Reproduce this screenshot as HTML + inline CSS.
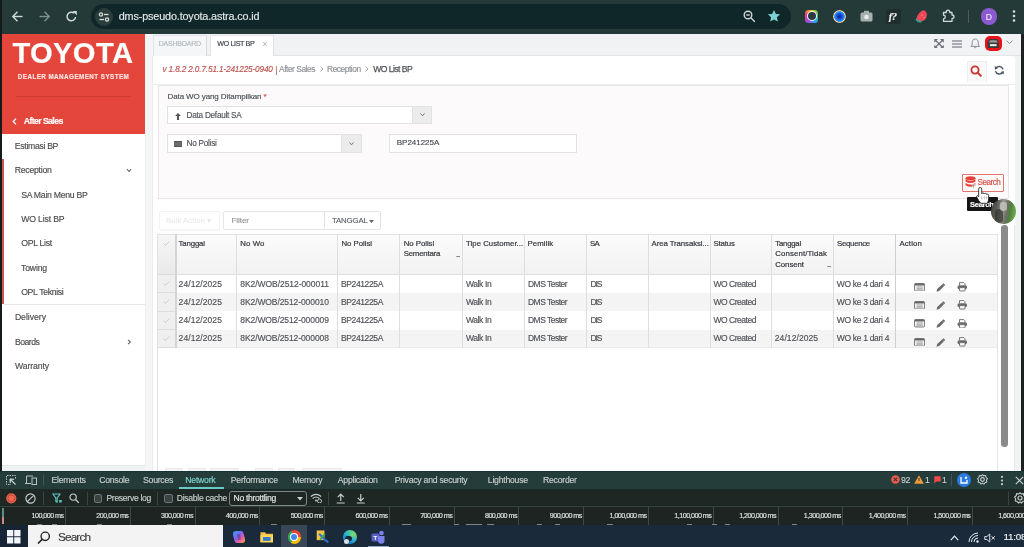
<!DOCTYPE html>
<html><head><meta charset="utf-8"><title>WO List BP</title>
<style>
html,body{margin:0;padding:0;}
body{width:1024px;height:547px;overflow:hidden;position:relative;font-family:"Liberation Sans",sans-serif;background:#f0f1f3;}
#w{position:absolute;left:0;top:0;width:1024px;height:547px;overflow:hidden;filter:blur(0.3px);}
#w>div,#w>svg{position:absolute;}
.t{white-space:nowrap;-webkit-text-stroke-width:0.15px;}
</style></head><body><div id="w">
<div style="left:0.0px;top:0.0px;width:1024.0px;height:547.0px;background:#f0f1f3"></div>
<div style="left:0.0px;top:0.0px;width:1024.0px;height:34.0px;background:#243a38"></div>
<div style="left:0.0px;top:0.0px;width:1.5px;height:547.0px;background:#161a1a"></div>
<div style="left:1020.7px;top:34.0px;width:3.3px;height:437.0px;background:#1c2020"></div>
<div style="left:91.4px;top:3.8px;width:700.1px;height:24.8px;background:#10272a;border-radius:12.4px"></div>
<div style="left:95px;top:7.5px;width:18px;height:18px;border-radius:9px;background:#2a3e3c"></div>
<svg style="left:97px;top:9.5px" width="14" height="14" viewBox="0 0 14 14"><g stroke="#d8dedd" stroke-width="1.3" fill="none"><circle cx="4" cy="4.5" r="1.6"/><line x1="7" y1="4.5" x2="11.5" y2="4.5"/><line x1="2.5" y1="9.5" x2="7" y2="9.5"/><circle cx="10" cy="9.5" r="1.6"/></g></svg>
<div class="t" style="top:10.38px;font-size:10.8px;line-height:12.96px;color:#e4e9e8;font-weight:normal;left:118.7px;;letter-spacing:-0.134px">dms-pseudo.toyota.astra.co.id</div>
<svg style="left:11px;top:10px" width="13" height="13" viewBox="0 0 13 13"><g stroke="#d3dbd9" stroke-width="1.4" fill="none"><line x1="2" y1="6.5" x2="11.5" y2="6.5"/><polyline points="6.5,1.8 1.8,6.5 6.5,11.2"/></g></svg>
<svg style="left:38px;top:10px" width="13" height="13" viewBox="0 0 13 13"><g stroke="#7f8f8d" stroke-width="1.4" fill="none"><line x1="1.5" y1="6.5" x2="11" y2="6.5"/><polyline points="6.5,1.8 11.2,6.5 6.5,11.2"/></g></svg>
<svg style="left:65px;top:9.5px" width="13" height="13" viewBox="0 0 13 13"><g stroke="#d3dbd9" stroke-width="1.5" fill="none"><path d="M10.6,7.2 A4.3,4.3 0 1 1 9.2,3.3"/></g><polygon points="7.5,1 11.8,1 11.8,5.3" fill="#d3dbd9"/></svg>
<svg style="left:743px;top:10px" width="13" height="13" viewBox="0 0 13 13"><g stroke="#cfd6d5" stroke-width="1.4" fill="none"><circle cx="5" cy="5" r="3.8"/><line x1="7.8" y1="7.8" x2="11.8" y2="11.8"/><line x1="3.2" y1="5" x2="6.8" y2="5"/></g></svg>
<svg style="left:767px;top:9px" width="14" height="14" viewBox="0 0 24 24"><path d="M12 1.5l3.2 6.9 7.3.8-5.5 5 1.5 7.3L12 17.8l-6.5 3.7 1.5-7.3-5.5-5 7.3-.8z" fill="#7fd1d0"/></svg>
<div style="left:805px;top:9.5px;width:13px;height:13px;border-radius:3.5px;background:conic-gradient(#f7c21b,#40c463,#2aa4f4,#a148e0,#ee3b7a,#f7c21b)"></div>
<div style="left:807.5px;top:12px;width:8px;height:8px;border-radius:4px;background:#2b3a45;box-shadow:0 0 0 1px #fff"></div>
<div style="left:832.5px;top:9.5px;width:13px;height:13px;border-radius:7px;background:radial-gradient(circle,#08208a 0,#1a5ee8 35%,#3a9cff 55%,#e9e2d0 62%,#f5a33a 70%,#f07a2a 100%)"></div>
<svg style="left:860px;top:10px" width="13" height="12" viewBox="0 0 13 12"><rect x="0.5" y="2.5" width="12" height="9" rx="1.5" fill="#a8b0ae"/><rect x="4" y="0.8" width="5" height="2.5" fill="#a8b0ae"/><circle cx="6.5" cy="7" r="2.3" fill="#e8ecea"/></svg>
<div style="left:886px;top:9px;width:15px;height:15px;background:#1f2d2c;border-radius:2px"></div>
<div class="t" style="top:10.56px;font-size:10.5px;line-height:12.60px;color:#f4f4f4;font-weight:bold;left:888.8px;font-family:Liberation Serif;letter-spacing:-0.5px"><i>f?</i></div>
<svg style="left:914px;top:9px" width="14" height="14" viewBox="0 0 14 14"><path d="M9 1.2 C12 1.5 13.2 4 12.8 7 C12.3 10 10 12 7.5 12.3 C5.5 12.5 3.2 11.5 2.2 10 C3 7 5 3 9 1.2z" fill="#ee4757"/><path d="M2 10 C3.5 12.5 6 13 7.5 12.4" stroke="#2aa79b" stroke-width="1.6" fill="none"/><circle cx="8" cy="6" r="0.6" fill="#ffb3b8"/><circle cx="10" cy="8.5" r="0.6" fill="#ffb3b8"/></svg>
<svg style="left:941px;top:9px" width="14" height="14" viewBox="0 0 14 14"><path d="M2.5 3.5 H5.2 Q5.2 1.2 7 1.2 Q8.8 1.2 8.8 3.5 H11 V6 Q13 6 13 7.8 Q13 9.6 11 9.6 V12.3 H2.5 V9.8 Q4.3 9.8 4.3 8 Q4.3 6.2 2.5 6.2z" stroke="#d3dbd9" stroke-width="1.3" fill="none" stroke-linejoin="round"/></svg>
<div style="left:967.5px;top:10.0px;width:1.0px;height:13.0px;background:#4a5c5a"></div>
<div style="left:980.5px;top:8px;width:16.5px;height:16.5px;border-radius:9px;background:#8c5ad0"></div>
<div class="t" style="top:11.95px;font-size:8.5px;line-height:10.20px;color:#f0e8fa;font-weight:normal;left:988.8px;transform:translateX(-50%)">D</div>
<svg style="left:1012px;top:9px" width="4" height="14" viewBox="0 0 4 14"><g fill="#d8dedd"><circle cx="2" cy="2.5" r="1.3"/><circle cx="2" cy="7" r="1.3"/><circle cx="2" cy="11.5" r="1.3"/></g></svg>
<div style="left:1.5px;top:34.0px;width:143.5px;height:100.4px;background:#e5463b"></div>
<div class="t" style="top:35.66px;font-size:29.2px;line-height:35.04px;color:#ffffff;font-weight:bold;left:12.4px;;letter-spacing:0.336px">TOYOTA</div>
<div class="t" style="top:72.74px;font-size:6.3px;line-height:7.56px;color:#fbe6e3;font-weight:bold;left:17.8px;;letter-spacing:0.430px">DEALER MANAGEMENT SYSTEM</div>
<div style="left:15.6px;top:96.2px;width:115.2px;height:1.0px;background:#d23b30"></div>
<svg style="left:11.8px;top:117.8px" width="5" height="7" viewBox="0 0 5 7"><polyline points="4,0.8 1.2,3.5 4,6.2" stroke="#fff" stroke-width="1.2" fill="none"/></svg>
<div class="t" style="top:115.97px;font-size:8.8px;line-height:10.56px;color:#ffffff;font-weight:bold;left:23.8px;;letter-spacing:-0.647px">After Sales</div>
<div style="left:1.5px;top:134.4px;width:143.5px;height:331.6px;background:#ffffff"></div>
<div style="left:1.5px;top:159.0px;width:2.3px;height:145.0px;background:#c9584e"></div>
<div style="left:3.8px;top:303.5px;width:141.2px;height:1.3px;background:#e4e6e8"></div>
<div class="t" style="top:140.97px;font-size:8.7px;line-height:10.44px;color:#4c4c4c;font-weight:normal;left:14.8px;;letter-spacing:-0.323px">Estimasi BP</div>
<div class="t" style="top:165.27px;font-size:8.7px;line-height:10.44px;color:#4c4c4c;font-weight:normal;left:14.8px;;letter-spacing:-0.266px">Reception</div>
<div class="t" style="top:190.07px;font-size:8.7px;line-height:10.44px;color:#4c4c4c;font-weight:normal;left:21.2px;;letter-spacing:-0.280px">SA Main Menu BP</div>
<div class="t" style="top:214.27px;font-size:8.7px;line-height:10.44px;color:#4c4c4c;font-weight:normal;left:21.2px;;letter-spacing:-0.167px">WO List BP</div>
<div class="t" style="top:238.37px;font-size:8.7px;line-height:10.44px;color:#4c4c4c;font-weight:normal;left:21.2px;;letter-spacing:-0.286px">OPL List</div>
<div class="t" style="top:262.77px;font-size:8.7px;line-height:10.44px;color:#4c4c4c;font-weight:normal;left:21.0px;;letter-spacing:-0.169px">Towing</div>
<div class="t" style="top:286.77px;font-size:8.7px;line-height:10.44px;color:#4c4c4c;font-weight:normal;left:21.2px;;letter-spacing:-0.327px">OPL Teknisi</div>
<div class="t" style="top:312.07px;font-size:8.7px;line-height:10.44px;color:#4c4c4c;font-weight:normal;left:14.9px;;letter-spacing:-0.042px">Delivery</div>
<div class="t" style="top:336.67px;font-size:8.7px;line-height:10.44px;color:#4c4c4c;font-weight:normal;left:14.9px;;letter-spacing:-0.506px">Boards</div>
<div class="t" style="top:360.77px;font-size:8.7px;line-height:10.44px;color:#4c4c4c;font-weight:normal;left:14.9px;;letter-spacing:-0.089px">Warranty</div>
<svg style="left:125.5px;top:168px" width="6" height="5" viewBox="0 0 6 5"><polyline points="0.8,1 3,3.4 5.2,1" stroke="#666" stroke-width="1.1" fill="none"/></svg>
<svg style="left:126.5px;top:338.5px" width="5" height="6" viewBox="0 0 5 6"><polyline points="1,0.8 3.4,3 1,5.2" stroke="#666" stroke-width="1.1" fill="none"/></svg>
<div style="left:1.5px;top:465.3px;width:143.5px;height:1.0px;background:#e4e6e8"></div>
<div style="left:145.0px;top:34.0px;width:7.5px;height:436.6px;background:#f4f5f7"></div>
<div style="left:144.6px;top:134.4px;width:1.0px;height:331.9px;background:#eceef0"></div>
<div style="left:152.0px;top:56.0px;width:1.0px;height:414.6px;background:#e9ebed"></div>
<div style="left:152.5px;top:34.0px;width:868.2px;height:21.8px;background:#f1f2f4"></div>
<div style="left:152.5px;top:55.3px;width:868.2px;height:1.0px;background:#e3e5e8"></div>
<div style="left:153.3px;top:34.8px;width:54.2px;height:21.0px;background:#f5f6f7;border:1px solid #e1e3e6;border-right:1.5px solid #d8dadd;border-bottom:none;box-sizing:border-box"></div>
<div class="t" style="top:40.27px;font-size:7.0px;line-height:8.40px;color:#b4b9be;font-weight:normal;left:158.8px;;letter-spacing:-0.262px">DASHBOARD</div>
<div style="left:209.5px;top:34.8px;width:64.5px;height:21.5px;background:#ffffff;border:1px solid #e1e3e6;border-bottom:none;box-sizing:border-box"></div>
<div class="t" style="top:40.49px;font-size:7.2px;line-height:8.64px;color:#454b52;font-weight:normal;left:217.3px;-webkit-text-stroke:0.2px #454b52;;letter-spacing:-0.391px">WO LIST BP</div>
<div class="t" style="top:39.45px;font-size:8.5px;line-height:10.20px;color:#b5b8bc;font-weight:normal;left:262.5px;">&#215;</div>
<svg style="left:933.5px;top:38.5px" width="10" height="9.5" viewBox="0 0 10 10"><g stroke="#6d7278" stroke-width="1.3" fill="none"><line x1="1" y1="1" x2="9" y2="9"/><line x1="9" y1="1" x2="1" y2="9"/></g><g fill="#6d7278"><polygon points="0,0 4,0 0,4"/><polygon points="10,0 6,0 10,4"/><polygon points="0,10 4,10 0,6"/><polygon points="10,10 6,10 10,6"/></g></svg>
<svg style="left:951.5px;top:39.5px" width="10" height="8" viewBox="0 0 10 8"><g stroke="#6d7278" stroke-width="1.1"><line x1="0" y1="1" x2="10" y2="1"/><line x1="0" y1="4" x2="10" y2="4"/><line x1="0" y1="7" x2="10" y2="7"/></g></svg>
<svg style="left:969.5px;top:38.3px" width="10.5" height="10.5" viewBox="0 0 11 11"><path d="M5.5 1 C3.2 1 2.3 3 2.3 5 L2.3 7.3 L1 8.8 L10 8.8 L8.7 7.3 L8.7 5 C8.7 3 7.8 1 5.5 1z" stroke="#7a7f84" stroke-width="0.9" fill="none"/><path d="M4.3 9.5 Q5.5 11 6.7 9.5" stroke="#7a7f84" stroke-width="0.9" fill="none"/></svg>
<div style="left:985px;top:35.6px;width:17.3px;height:15.2px;border-radius:5px;background:#e8121a"></div>
<svg style="left:987.3px;top:38px" width="12.5" height="10.5" viewBox="0 0 12 10"><path d="M2.2 1 H9.8 L11.5 4.5 V9.5 H0.5 V4.5z" fill="#3a3a3a"/><path d="M3 2 H9 L10.2 4.3 H1.8z" fill="#9a9a9a"/><rect x="2.8" y="5.8" width="6.4" height="2" fill="#e8e8e8"/></svg>
<svg style="left:1005.5px;top:40px" width="7" height="4.5" viewBox="0 0 7 4.5"><polyline points="0.6,0.6 3.5,3.6 6.4,0.6" stroke="#8a8f94" stroke-width="1" fill="none"/></svg>
<div style="left:152.5px;top:56.4px;width:862.1px;height:414.2px;background:#ffffff;border-top-right-radius:3px"></div>
<div style="left:1014.6px;top:56.3px;width:6.1px;height:414.3px;background:#f1f2f4"></div>
<div class="t" style="top:64.64px;font-size:8.2px;line-height:9.84px;color:#c0524e;font-weight:normal;font-style:italic;left:162.5px;;letter-spacing:-0.133px">v 1.8.2 2.0.7.51.1-241225-0940</div>
<div class="t" style="top:64.66px;font-size:8.6px;line-height:10.32px;color:#c0625e;font-weight:normal;left:275.2px;">|</div>
<div class="t" style="top:64.45px;font-size:8.4px;line-height:10.08px;color:#8d9196;font-weight:normal;left:279.1px;;letter-spacing:-0.467px">After Sales</div>
<svg style="left:319.8px;top:65.8px" width="4" height="6" viewBox="0 0 4 6"><polyline points="0.7,0.6 3,3 0.7,5.4" stroke="#9a9ea2" stroke-width="0.9" fill="none"/></svg>
<div class="t" style="top:64.45px;font-size:8.4px;line-height:10.08px;color:#8d9196;font-weight:normal;left:327.1px;;letter-spacing:-0.465px">Reception</div>
<svg style="left:365.2px;top:65.8px" width="4" height="6" viewBox="0 0 4 6"><polyline points="0.7,0.6 3,3 0.7,5.4" stroke="#9a9ea2" stroke-width="0.9" fill="none"/></svg>
<div class="t" style="top:64.26px;font-size:8.6px;line-height:10.32px;color:#505459;font-weight:normal;left:373.2px;-webkit-text-stroke:0.25px #505459;;letter-spacing:-0.547px">WO List BP</div>
<div style="left:152.5px;top:83.5px;width:862.1px;height:1.0px;background:#eceeef"></div>
<div style="left:967.4px;top:61.0px;width:19.2px;height:21.0px;background:#f9f9f9;border:1px solid #eeeeee;border-bottom:none;box-sizing:border-box"></div>
<svg style="left:970px;top:64.5px" width="12" height="12" viewBox="0 0 12 12"><circle cx="5" cy="5" r="3.6" stroke="#d2322d" stroke-width="1.8" fill="none"/><line x1="7.6" y1="7.6" x2="10.8" y2="10.8" stroke="#d2322d" stroke-width="2" stroke-linecap="round"/></svg>
<svg style="left:993.5px;top:64.5px" width="10.5" height="10.5" viewBox="0 0 12 12"><path d="M10.3 5 A4.5 4.5 0 0 0 2.2 3.6" stroke="#4d5560" stroke-width="1.7" fill="none"/><polygon points="0.8,1.2 4.6,3.6 1.0,5.4" fill="#4d5560"/><path d="M1.7 7 A4.5 4.5 0 0 0 9.8 8.4" stroke="#4d5560" stroke-width="1.7" fill="none"/><polygon points="11.2,10.8 7.4,8.4 11,6.6" fill="#4d5560"/></svg>
<div style="left:157.8px;top:84.5px;width:851.2px;height:114.0px;background:#fcfafa;border:1px solid #e8e6e6;box-sizing:border-box"></div>
<div class="t" style="top:91.93px;font-size:8.0px;line-height:9.60px;color:#4b4f55;font-weight:normal;left:167.5px;;letter-spacing:-0.105px">Data WO yang Ditampilkan <span style="color:#d9534f">*</span></div>
<div style="left:167.2px;top:105.5px;width:265.3px;height:18.3px;background:#ffffff;border:1px solid #e2e2e2;box-sizing:border-box"></div>
<div style="left:411.6px;top:105.5px;width:20.9px;height:18.3px;background:#ececec;border:1px solid #e2e2e2;box-sizing:border-box"></div>
<svg style="left:419.5px;top:113px" width="5" height="3.5" viewBox="0 0 5 3.5"><polyline points="0.5,0.5 2.5,2.8 4.5,0.5" stroke="#666" stroke-width="0.9" fill="none"/></svg>
<svg style="left:174.5px;top:112.5px" width="6" height="7" viewBox="0 0 6 7"><polygon points="3,0 6,3 4,3 4,7 2,7 2,3 0,3" fill="#555"/></svg>
<div class="t" style="top:110.84px;font-size:8.2px;line-height:9.84px;color:#50545a;font-weight:normal;left:186.6px;;letter-spacing:-0.251px">Data Default SA</div>
<div style="left:167.2px;top:133.5px;width:194.4px;height:19.0px;background:#ffffff;border:1px solid #e2e2e2;box-sizing:border-box"></div>
<div style="left:341.0px;top:133.5px;width:20.6px;height:19.0px;background:#ececec;border:1px solid #e2e2e2;box-sizing:border-box"></div>
<svg style="left:348.8px;top:141.5px" width="5" height="3.5" viewBox="0 0 5 3.5"><polyline points="0.5,0.5 2.5,2.8 4.5,0.5" stroke="#666" stroke-width="0.9" fill="none"/></svg>
<svg style="left:173.5px;top:140.5px" width="8" height="6" viewBox="0 0 8 6"><rect x="0" y="0" width="8" height="6" fill="#555"/><g stroke="#aaa" stroke-width="0.5"><line x1="0" y1="2" x2="8" y2="2"/><line x1="0" y1="4" x2="8" y2="4"/></g></svg>
<div class="t" style="top:138.64px;font-size:8.2px;line-height:9.84px;color:#50545a;font-weight:normal;left:186.6px;;letter-spacing:-0.264px">No Polisi</div>
<div style="left:389.4px;top:133.5px;width:187.6px;height:19.0px;background:#ffffff;border:1px solid #e2e2e2;box-sizing:border-box"></div>
<div class="t" style="top:138.43px;font-size:8.0px;line-height:9.60px;color:#44484e;font-weight:normal;left:396.8px;;letter-spacing:-0.025px">BP241225A</div>
<div style="left:962.1px;top:174.2px;width:41.7px;height:17.8px;background:#fffafa;border:1px solid #e2736d;box-sizing:border-box;border-radius:1px"></div>
<svg style="left:964.8px;top:176.3px" width="11" height="13" viewBox="0 0 11 13"><g fill="#e5413a"><ellipse cx="5.5" cy="2.2" rx="5" ry="2"/><path d="M0.5 3.3 Q5.5 6.3 10.5 3.3 V5.6 Q5.5 8.6 0.5 5.6z"/><path d="M0.5 6.9 Q5.5 9.9 10.5 6.9 V9.2 Q5.5 12.2 0.5 9.2z"/></g><path d="M6.5 8.5 H10.5 L9 10.5 V12.5 L8 12 V10.5z" fill="#8a8a8a" stroke="#fff" stroke-width="0.5"/></svg>
<div class="t" style="top:178.24px;font-size:8.2px;line-height:9.84px;color:#dc4e46;font-weight:normal;left:977.5px;;letter-spacing:-0.511px">Search</div>
<div style="left:158.5px;top:211.2px;width:61.0px;height:18.8px;background:#ffffff;border:1px solid #f3f3f3;box-sizing:border-box;border-radius:2px;box-shadow:0 1px 1px rgba(0,0,0,0.03)"></div>
<div class="t" style="top:215.92px;font-size:7.8px;line-height:9.36px;color:#e6e6e6;font-weight:normal;left:166.0px;-webkit-text-stroke-width:0;;letter-spacing:0.038px">Bulk Action &#9662;</div>
<div style="left:223.0px;top:211.2px;width:158.2px;height:18.8px;background:#ffffff;border:1px solid #e4e4e4;box-sizing:border-box;border-radius:2px"></div>
<div style="left:324.4px;top:211.2px;width:56.8px;height:18.8px;background:#ffffff;border:1px solid #e4e4e4;box-sizing:border-box;border-radius:0 2px 2px 0"></div>
<div class="t" style="top:215.73px;font-size:8.0px;line-height:9.60px;color:#8f9398;font-weight:normal;left:231.4px;;letter-spacing:-0.036px">Filter</div>
<div class="t" style="top:215.92px;font-size:7.8px;line-height:9.36px;color:#5d6268;font-weight:normal;left:332.0px;;letter-spacing:-0.148px">TANGGAL</div>
<svg style="left:368.5px;top:219.5px" width="5" height="3" viewBox="0 0 5 3"><polygon points="0,0 5,0 2.5,3" fill="#5d6268"/></svg>
<div style="left:157.3px;top:234.4px;width:840.7px;height:40.2px;background:linear-gradient(#fbfbfb,#f2f2f2);border-top:1px solid #e2e2e2;border-bottom:1px solid #dedede;box-sizing:border-box"></div>
<div style="left:157.3px;top:274.6px;width:840.7px;height:18.0px;background:#ffffff"></div>
<div style="left:157.3px;top:292.6px;width:840.7px;height:18.6px;background:#f4f4f4"></div>
<div style="left:157.3px;top:311.2px;width:840.7px;height:18.3px;background:#ffffff"></div>
<div style="left:157.3px;top:329.5px;width:840.7px;height:18.1px;background:#f4f4f4"></div>
<div style="left:157.3px;top:347.1px;width:840.7px;height:1.0px;background:#ececec"></div>
<div style="left:156.8px;top:234.4px;width:1.0px;height:113.2px;background:#dedede"></div>
<div style="left:175.0px;top:234.4px;width:1.0px;height:113.2px;background:#dedede"></div>
<div style="left:236.0px;top:234.4px;width:1.0px;height:113.2px;background:#dedede"></div>
<div style="left:337.2px;top:234.4px;width:1.0px;height:113.2px;background:#dedede"></div>
<div style="left:398.8px;top:234.4px;width:1.0px;height:113.2px;background:#dedede"></div>
<div style="left:461.5px;top:234.4px;width:1.0px;height:113.2px;background:#dedede"></div>
<div style="left:524.0px;top:234.4px;width:1.0px;height:113.2px;background:#dedede"></div>
<div style="left:586.1px;top:234.4px;width:1.0px;height:113.2px;background:#dedede"></div>
<div style="left:647.7px;top:234.4px;width:1.0px;height:113.2px;background:#dedede"></div>
<div style="left:709.9px;top:234.4px;width:1.0px;height:113.2px;background:#dedede"></div>
<div style="left:771.3px;top:234.4px;width:1.0px;height:113.2px;background:#dedede"></div>
<div style="left:832.9px;top:234.4px;width:1.0px;height:113.2px;background:#dedede"></div>
<div style="left:894.5px;top:234.4px;width:1.0px;height:113.2px;background:#cfcfcf"></div>
<div style="left:997.5px;top:234.4px;width:1.0px;height:113.2px;background:#dedede"></div>
<div style="left:157.3px;top:235.4px;width:18.2px;height:39.2px;background:linear-gradient(#f6f6f6,#e9e9e9)"></div>
<div style="left:157.3px;top:274.6px;width:18.2px;height:73.0px;background:#efefef"></div>
<div style="left:157.3px;top:274.1px;width:18.2px;height:1.0px;background:#dcdcdc"></div>
<div style="left:157.3px;top:292.1px;width:18.2px;height:1.0px;background:#dcdcdc"></div>
<div style="left:157.3px;top:310.7px;width:18.2px;height:1.0px;background:#dcdcdc"></div>
<div style="left:157.3px;top:329.0px;width:18.2px;height:1.0px;background:#dcdcdc"></div>
<div style="left:157.3px;top:347.1px;width:18.2px;height:1.0px;background:#dcdcdc"></div>
<div style="left:156.8px;top:234.4px;width:1.0px;height:236.2px;background:#e2e2e2"></div>
<div style="left:997.2px;top:234.4px;width:1.0px;height:236.2px;background:#e4e4e4"></div>
<div style="left:174.5px;top:234.4px;width:2.0px;height:113.2px;background:#d4d4d4"></div>
<svg style="left:162.5px;top:240.5px" width="7" height="5" viewBox="0 0 7 5"><polyline points="0.6,2.6 2.5,4.3 6.4,0.6" stroke="#c8c8c8" stroke-width="0.9" fill="none"/></svg>
<svg style="left:162.5px;top:281.1px" width="7" height="5" viewBox="0 0 7 5"><polyline points="0.6,2.6 2.5,4.3 6.4,0.6" stroke="#c8c8c8" stroke-width="0.9" fill="none"/></svg>
<svg style="left:162.5px;top:299.1px" width="7" height="5" viewBox="0 0 7 5"><polyline points="0.6,2.6 2.5,4.3 6.4,0.6" stroke="#c8c8c8" stroke-width="0.9" fill="none"/></svg>
<svg style="left:162.5px;top:317.7px" width="7" height="5" viewBox="0 0 7 5"><polyline points="0.6,2.6 2.5,4.3 6.4,0.6" stroke="#c8c8c8" stroke-width="0.9" fill="none"/></svg>
<svg style="left:162.5px;top:336.0px" width="7" height="5" viewBox="0 0 7 5"><polyline points="0.6,2.6 2.5,4.3 6.4,0.6" stroke="#c8c8c8" stroke-width="0.9" fill="none"/></svg>
<div class="t" style="top:239.32px;font-size:7.8px;line-height:9.36px;color:#33363b;font-weight:normal;left:178.4px;-webkit-text-stroke:0.2px #33363b;;letter-spacing:-0.102px">Tanggal</div>
<div class="t" style="top:239.32px;font-size:7.8px;line-height:9.36px;color:#33363b;font-weight:normal;left:240.3px;-webkit-text-stroke:0.2px #33363b;;letter-spacing:0.074px">No Wo</div>
<div class="t" style="top:239.32px;font-size:7.8px;line-height:9.36px;color:#33363b;font-weight:normal;left:341.5px;-webkit-text-stroke:0.2px #33363b;;letter-spacing:-0.033px">No Polisi</div>
<div class="t" style="top:239.32px;font-size:7.8px;line-height:9.36px;color:#33363b;font-weight:normal;left:403.7px;-webkit-text-stroke:0.2px #33363b;;letter-spacing:-0.033px">No Polisi</div>
<div class="t" style="top:249.42px;font-size:7.8px;line-height:9.36px;color:#33363b;font-weight:normal;left:403.7px;-webkit-text-stroke:0.2px #33363b;;letter-spacing:-0.193px">Sementara</div>
<div class="t" style="top:239.32px;font-size:7.8px;line-height:9.36px;color:#33363b;font-weight:normal;left:466.1px;-webkit-text-stroke:0.2px #33363b;;letter-spacing:0.005px">Tipe Customer...</div>
<div class="t" style="top:239.32px;font-size:7.8px;line-height:9.36px;color:#33363b;font-weight:normal;left:527.6px;-webkit-text-stroke:0.2px #33363b;;letter-spacing:0.077px">Pemilik</div>
<div class="t" style="top:239.32px;font-size:7.8px;line-height:9.36px;color:#33363b;font-weight:normal;left:590.1px;-webkit-text-stroke:0.2px #33363b;;letter-spacing:-0.906px">SA</div>
<div class="t" style="top:239.32px;font-size:7.8px;line-height:9.36px;color:#33363b;font-weight:normal;left:651.6px;-webkit-text-stroke:0.2px #33363b;;letter-spacing:-0.081px">Area Transaksi...</div>
<div class="t" style="top:239.32px;font-size:7.8px;line-height:9.36px;color:#33363b;font-weight:normal;left:713.5px;-webkit-text-stroke:0.2px #33363b;;letter-spacing:-0.142px">Status</div>
<div class="t" style="top:239.32px;font-size:7.8px;line-height:9.36px;color:#33363b;font-weight:normal;left:775.3px;-webkit-text-stroke:0.2px #33363b;;letter-spacing:-0.235px">Tanggal</div>
<div class="t" style="top:249.42px;font-size:7.8px;line-height:9.36px;color:#33363b;font-weight:normal;left:775.3px;-webkit-text-stroke:0.2px #33363b;;letter-spacing:0.126px">Consent/Tidak</div>
<div class="t" style="top:259.92px;font-size:7.8px;line-height:9.36px;color:#33363b;font-weight:normal;left:775.3px;-webkit-text-stroke:0.2px #33363b;;letter-spacing:-0.074px">Consent</div>
<div class="t" style="top:239.32px;font-size:7.8px;line-height:9.36px;color:#33363b;font-weight:normal;left:837.1px;-webkit-text-stroke:0.2px #33363b;;letter-spacing:-0.289px">Sequence</div>
<div class="t" style="top:239.32px;font-size:7.8px;line-height:9.36px;color:#33363b;font-weight:normal;left:899.4px;-webkit-text-stroke:0.2px #33363b;;letter-spacing:0.166px">Action</div>
<div class="t" style="top:251.32px;font-size:6px;line-height:7.20px;color:#555;font-weight:normal;left:456.5px;">_</div>
<div class="t" style="top:261.32px;font-size:6px;line-height:7.20px;color:#555;font-weight:normal;left:827.5px;">_</div>
<div class="t" style="top:278.65px;font-size:8.5px;line-height:10.20px;color:#4e5156;font-weight:normal;left:178.6px;;letter-spacing:0.084px">24/12/2025</div>
<div class="t" style="top:278.65px;font-size:8.5px;line-height:10.20px;color:#4e5156;font-weight:normal;left:240.3px;;letter-spacing:-0.057px">8K2/WOB/2512-000011</div>
<div class="t" style="top:278.65px;font-size:8.5px;line-height:10.20px;color:#4e5156;font-weight:normal;left:340.9px;;letter-spacing:-0.359px">BP241225A</div>
<div class="t" style="top:278.65px;font-size:8.5px;line-height:10.20px;color:#4e5156;font-weight:normal;left:465.9px;;letter-spacing:-0.372px">Walk In</div>
<div class="t" style="top:278.65px;font-size:8.5px;line-height:10.20px;color:#4e5156;font-weight:normal;left:528.0px;;letter-spacing:-0.528px">DMS Tester</div>
<div class="t" style="top:278.65px;font-size:8.5px;line-height:10.20px;color:#4e5156;font-weight:normal;left:590.4px;;letter-spacing:-1.036px">DIS</div>
<div class="t" style="top:278.65px;font-size:8.5px;line-height:10.20px;color:#4e5156;font-weight:normal;left:713.6px;;letter-spacing:-0.494px">WO Created</div>
<div class="t" style="top:278.65px;font-size:8.5px;line-height:10.20px;color:#4e5156;font-weight:normal;left:836.8px;;letter-spacing:-0.314px">WO ke 4 dari 4</div>
<svg style="left:914px;top:282.6px" width="11" height="8.5" viewBox="0 0 11 8.5"><rect x="0.5" y="0.5" width="10" height="7.5" rx="1" fill="#f2f2f2" stroke="#707070" stroke-width="0.9"/><rect x="0.5" y="0.5" width="10" height="1.9" rx="0.8" fill="#666"/><g stroke="#9a9a9a" stroke-width="0.8"><line x1="2.5" y1="3.9" x2="8.8" y2="3.9"/><line x1="2.5" y1="5.3" x2="8.8" y2="5.3"/><line x1="2.5" y1="6.7" x2="8.8" y2="6.7"/></g></svg>
<svg style="left:936px;top:282.8px" width="9.5" height="9" viewBox="0 0 9.5 9"><path d="M7.4 0.3 L9.2 2.1 L3.2 8.1 L0.5 8.8 L1.2 6.1z" fill="#6a6a6a"/><line x1="6.2" y1="1.5" x2="8" y2="3.3" stroke="#bbb" stroke-width="0.5"/></svg>
<svg style="left:956.6px;top:282.3px" width="10.5" height="9.5" viewBox="0 0 10.5 9.5"><path d="M2.5 3.2 V0.6 H6.8 L8 1.8 V3.2" fill="#fafafa" stroke="#6a6a6a" stroke-width="0.9"/><rect x="0.5" y="3.2" width="9.5" height="4" rx="1.6" fill="#6a6a6a"/><rect x="2.5" y="5.6" width="5.5" height="3.4" rx="0.5" fill="#f6f6f6" stroke="#6a6a6a" stroke-width="0.9"/></svg>
<div class="t" style="top:296.55px;font-size:8.5px;line-height:10.20px;color:#4e5156;font-weight:normal;left:178.6px;;letter-spacing:0.084px">24/12/2025</div>
<div class="t" style="top:296.55px;font-size:8.5px;line-height:10.20px;color:#4e5156;font-weight:normal;left:240.3px;;letter-spacing:-0.093px">8K2/WOB/2512-000010</div>
<div class="t" style="top:296.55px;font-size:8.5px;line-height:10.20px;color:#4e5156;font-weight:normal;left:340.9px;;letter-spacing:-0.359px">BP241225A</div>
<div class="t" style="top:296.55px;font-size:8.5px;line-height:10.20px;color:#4e5156;font-weight:normal;left:465.9px;;letter-spacing:-0.372px">Walk In</div>
<div class="t" style="top:296.55px;font-size:8.5px;line-height:10.20px;color:#4e5156;font-weight:normal;left:528.0px;;letter-spacing:-0.528px">DMS Tester</div>
<div class="t" style="top:296.55px;font-size:8.5px;line-height:10.20px;color:#4e5156;font-weight:normal;left:590.4px;;letter-spacing:-1.036px">DIS</div>
<div class="t" style="top:296.55px;font-size:8.5px;line-height:10.20px;color:#4e5156;font-weight:normal;left:713.6px;;letter-spacing:-0.494px">WO Created</div>
<div class="t" style="top:296.55px;font-size:8.5px;line-height:10.20px;color:#4e5156;font-weight:normal;left:836.8px;;letter-spacing:-0.314px">WO ke 3 dari 4</div>
<svg style="left:914px;top:300.6px" width="11" height="8.5" viewBox="0 0 11 8.5"><rect x="0.5" y="0.5" width="10" height="7.5" rx="1" fill="#f2f2f2" stroke="#707070" stroke-width="0.9"/><rect x="0.5" y="0.5" width="10" height="1.9" rx="0.8" fill="#666"/><g stroke="#9a9a9a" stroke-width="0.8"><line x1="2.5" y1="3.9" x2="8.8" y2="3.9"/><line x1="2.5" y1="5.3" x2="8.8" y2="5.3"/><line x1="2.5" y1="6.7" x2="8.8" y2="6.7"/></g></svg>
<svg style="left:936px;top:300.8px" width="9.5" height="9" viewBox="0 0 9.5 9"><path d="M7.4 0.3 L9.2 2.1 L3.2 8.1 L0.5 8.8 L1.2 6.1z" fill="#6a6a6a"/><line x1="6.2" y1="1.5" x2="8" y2="3.3" stroke="#bbb" stroke-width="0.5"/></svg>
<svg style="left:956.6px;top:300.3px" width="10.5" height="9.5" viewBox="0 0 10.5 9.5"><path d="M2.5 3.2 V0.6 H6.8 L8 1.8 V3.2" fill="#fafafa" stroke="#6a6a6a" stroke-width="0.9"/><rect x="0.5" y="3.2" width="9.5" height="4" rx="1.6" fill="#6a6a6a"/><rect x="2.5" y="5.6" width="5.5" height="3.4" rx="0.5" fill="#f6f6f6" stroke="#6a6a6a" stroke-width="0.9"/></svg>
<div class="t" style="top:315.05px;font-size:8.5px;line-height:10.20px;color:#4e5156;font-weight:normal;left:178.6px;;letter-spacing:0.084px">24/12/2025</div>
<div class="t" style="top:315.05px;font-size:8.5px;line-height:10.20px;color:#4e5156;font-weight:normal;left:240.3px;;letter-spacing:-0.093px">8K2/WOB/2512-000009</div>
<div class="t" style="top:315.05px;font-size:8.5px;line-height:10.20px;color:#4e5156;font-weight:normal;left:340.9px;;letter-spacing:-0.359px">BP241225A</div>
<div class="t" style="top:315.05px;font-size:8.5px;line-height:10.20px;color:#4e5156;font-weight:normal;left:465.9px;;letter-spacing:-0.372px">Walk In</div>
<div class="t" style="top:315.05px;font-size:8.5px;line-height:10.20px;color:#4e5156;font-weight:normal;left:528.0px;;letter-spacing:-0.528px">DMS Tester</div>
<div class="t" style="top:315.05px;font-size:8.5px;line-height:10.20px;color:#4e5156;font-weight:normal;left:590.4px;;letter-spacing:-1.036px">DIS</div>
<div class="t" style="top:315.05px;font-size:8.5px;line-height:10.20px;color:#4e5156;font-weight:normal;left:713.6px;;letter-spacing:-0.494px">WO Created</div>
<div class="t" style="top:315.05px;font-size:8.5px;line-height:10.20px;color:#4e5156;font-weight:normal;left:836.8px;;letter-spacing:-0.314px">WO ke 2 dari 4</div>
<svg style="left:914px;top:319.2px" width="11" height="8.5" viewBox="0 0 11 8.5"><rect x="0.5" y="0.5" width="10" height="7.5" rx="1" fill="#f2f2f2" stroke="#707070" stroke-width="0.9"/><rect x="0.5" y="0.5" width="10" height="1.9" rx="0.8" fill="#666"/><g stroke="#9a9a9a" stroke-width="0.8"><line x1="2.5" y1="3.9" x2="8.8" y2="3.9"/><line x1="2.5" y1="5.3" x2="8.8" y2="5.3"/><line x1="2.5" y1="6.7" x2="8.8" y2="6.7"/></g></svg>
<svg style="left:936px;top:319.4px" width="9.5" height="9" viewBox="0 0 9.5 9"><path d="M7.4 0.3 L9.2 2.1 L3.2 8.1 L0.5 8.8 L1.2 6.1z" fill="#6a6a6a"/><line x1="6.2" y1="1.5" x2="8" y2="3.3" stroke="#bbb" stroke-width="0.5"/></svg>
<svg style="left:956.6px;top:318.9px" width="10.5" height="9.5" viewBox="0 0 10.5 9.5"><path d="M2.5 3.2 V0.6 H6.8 L8 1.8 V3.2" fill="#fafafa" stroke="#6a6a6a" stroke-width="0.9"/><rect x="0.5" y="3.2" width="9.5" height="4" rx="1.6" fill="#6a6a6a"/><rect x="2.5" y="5.6" width="5.5" height="3.4" rx="0.5" fill="#f6f6f6" stroke="#6a6a6a" stroke-width="0.9"/></svg>
<div class="t" style="top:332.95px;font-size:8.5px;line-height:10.20px;color:#4e5156;font-weight:normal;left:178.6px;;letter-spacing:0.084px">24/12/2025</div>
<div class="t" style="top:332.95px;font-size:8.5px;line-height:10.20px;color:#4e5156;font-weight:normal;left:240.3px;;letter-spacing:-0.093px">8K2/WOB/2512-000008</div>
<div class="t" style="top:332.95px;font-size:8.5px;line-height:10.20px;color:#4e5156;font-weight:normal;left:340.9px;;letter-spacing:-0.359px">BP241225A</div>
<div class="t" style="top:332.95px;font-size:8.5px;line-height:10.20px;color:#4e5156;font-weight:normal;left:465.9px;;letter-spacing:-0.372px">Walk In</div>
<div class="t" style="top:332.95px;font-size:8.5px;line-height:10.20px;color:#4e5156;font-weight:normal;left:528.0px;;letter-spacing:-0.528px">DMS Tester</div>
<div class="t" style="top:332.95px;font-size:8.5px;line-height:10.20px;color:#4e5156;font-weight:normal;left:590.4px;;letter-spacing:-1.036px">DIS</div>
<div class="t" style="top:332.95px;font-size:8.5px;line-height:10.20px;color:#4e5156;font-weight:normal;left:713.6px;;letter-spacing:-0.494px">WO Created</div>
<div class="t" style="top:332.95px;font-size:8.5px;line-height:10.20px;color:#4e5156;font-weight:normal;left:774.8px;;letter-spacing:0.084px">24/12/2025</div>
<div class="t" style="top:332.95px;font-size:8.5px;line-height:10.20px;color:#4e5156;font-weight:normal;left:836.8px;;letter-spacing:-0.314px">WO ke 1 dari 4</div>
<svg style="left:914px;top:337.5px" width="11" height="8.5" viewBox="0 0 11 8.5"><rect x="0.5" y="0.5" width="10" height="7.5" rx="1" fill="#f2f2f2" stroke="#707070" stroke-width="0.9"/><rect x="0.5" y="0.5" width="10" height="1.9" rx="0.8" fill="#666"/><g stroke="#9a9a9a" stroke-width="0.8"><line x1="2.5" y1="3.9" x2="8.8" y2="3.9"/><line x1="2.5" y1="5.3" x2="8.8" y2="5.3"/><line x1="2.5" y1="6.7" x2="8.8" y2="6.7"/></g></svg>
<svg style="left:936px;top:337.7px" width="9.5" height="9" viewBox="0 0 9.5 9"><path d="M7.4 0.3 L9.2 2.1 L3.2 8.1 L0.5 8.8 L1.2 6.1z" fill="#6a6a6a"/><line x1="6.2" y1="1.5" x2="8" y2="3.3" stroke="#bbb" stroke-width="0.5"/></svg>
<svg style="left:956.6px;top:337.2px" width="10.5" height="9.5" viewBox="0 0 10.5 9.5"><path d="M2.5 3.2 V0.6 H6.8 L8 1.8 V3.2" fill="#fafafa" stroke="#6a6a6a" stroke-width="0.9"/><rect x="0.5" y="3.2" width="9.5" height="4" rx="1.6" fill="#6a6a6a"/><rect x="2.5" y="5.6" width="5.5" height="3.4" rx="0.5" fill="#f6f6f6" stroke="#6a6a6a" stroke-width="0.9"/></svg>
<div style="left:998.0px;top:225.0px;width:16.6px;height:245.6px;background:#ffffff"></div>
<div style="left:1013.6px;top:225.0px;width:1.0px;height:245.6px;background:#e8e8e8"></div>
<div style="left:1001px;top:225px;width:6.5px;height:222px;border-radius:3.3px;background:#8a8a8a"></div>
<div style="left:164.5px;top:468.0px;width:18.5px;height:2.6px;background:#f3f3f3;border:1px solid #ebebeb;border-bottom:none;box-sizing:border-box"></div>
<div style="left:188.0px;top:468.0px;width:17.5px;height:2.6px;background:#f3f3f3;border:1px solid #ebebeb;border-bottom:none;box-sizing:border-box"></div>
<div style="left:210.4px;top:468.0px;width:28.4px;height:2.6px;background:#f3f3f3;border:1px solid #ebebeb;border-bottom:none;box-sizing:border-box"></div>
<div style="left:255.4px;top:468.0px;width:17.6px;height:2.6px;background:#f3f3f3;border:1px solid #ebebeb;border-bottom:none;box-sizing:border-box"></div>
<div style="left:277.8px;top:468.0px;width:17.6px;height:2.6px;background:#f3f3f3;border:1px solid #ebebeb;border-bottom:none;box-sizing:border-box"></div>
<div style="left:302.2px;top:468.0px;width:40.1px;height:2.6px;background:#f3f3f3;border:1px solid #ebebeb;border-bottom:none;box-sizing:border-box"></div>
<div style="left:967.3px;top:196.5px;width:30.7px;height:14.7px;background:#151515;border-radius:1px"></div>
<div class="t" style="top:200.01px;font-size:7.6px;line-height:9.12px;color:#ffffff;font-weight:bold;left:970.0px;letter-spacing:-0.3px">Search</div>
<div style="left:990.8px;top:198.5px;width:25px;height:25px;border-radius:13px;overflow:hidden;background:linear-gradient(100deg,#3e3e3a 0,#5a5a55 25%,#9c9c96 45%,#6f6f68 60%,#4f7f3a 72%,#78c060 100%)"><div style="position:absolute;left:4px;top:10px;width:8px;height:14px;border-radius:4px;background:#2f2f2c;opacity:.7"></div><div style="position:absolute;left:9px;top:3px;width:7px;height:9px;border-radius:3px;background:#c6c6c0;opacity:.8"></div></div>
<svg style="left:976px;top:186.5px" width="13.5" height="17" viewBox="0 0 13 16.5"><path d="M2.5 2 Q2.5 0.5 4 0.5 Q5.5 0.5 5.5 2 V6.5 Q5.7 5.8 6.8 5.8 Q7.9 5.8 8 6.8 Q8.2 6.2 9.2 6.2 Q10.2 6.2 10.3 7.2 Q10.5 6.8 11.2 6.9 Q12.2 7.1 12.2 8.2 V11 Q12.2 13.5 11 15.8 H4.5 Q3.5 14.5 2.5 13 L0.6 9.8 Q0.2 9 0.9 8.6 Q1.6 8.3 2.2 9 L2.5 9.5 Z" fill="#ffffff" stroke="#1a1a1a" stroke-width="0.8"/><g stroke="#777" stroke-width="0.5"><line x1="5.5" y1="9" x2="5.5" y2="12"/><line x1="8" y1="9" x2="8" y2="12"/><line x1="10.3" y1="9" x2="10.3" y2="12"/></g></svg>
<div style="left:0.0px;top:470.6px;width:1024.0px;height:18.4px;background:#243c3a"></div>
<div style="left:0.0px;top:470.6px;width:1024.0px;height:0.8px;background:#173230"></div>
<div style="left:0.0px;top:488.6px;width:1024.0px;height:0.8px;background:#2f4845"></div>
<div style="left:0.0px;top:489.4px;width:1024.0px;height:17.3px;background:#1f2725"></div>
<div style="left:0.0px;top:506.4px;width:1024.0px;height:0.8px;background:#34423f"></div>
<div style="left:0.0px;top:507.2px;width:1024.0px;height:18.1px;background:#1d2422"></div>
<svg style="left:6px;top:474.5px" width="10" height="10" viewBox="0 0 10 10"><g stroke="#b9c3c1" stroke-width="1" fill="none" stroke-dasharray="1.5 1"><polyline points="5,0.5 0.5,0.5 0.5,9.5 5,9.5"/><polyline points="6,0.5 9.5,0.5 9.5,4"/></g><path d="M4 4 L9.5 9.5 M4 4 L8 4.3 M4 4 L4.3 8" stroke="#c8d2d0" stroke-width="1.2"/></svg>
<svg style="left:25px;top:474.5px" width="12" height="10" viewBox="0 0 12 10"><g stroke="#b9c3c1" stroke-width="1" fill="none"><path d="M1.5 8.5 V1 H8"/><line x1="0" y1="8.5" x2="6" y2="8.5"/><rect x="7" y="3" width="4.5" height="6.5"/></g></svg>
<div style="left:42.8px;top:474.0px;width:0.8px;height:12.0px;background:#3f5654"></div>
<div class="t" style="top:475.37px;font-size:8.7px;line-height:10.44px;color:#c6cfcd;font-weight:normal;left:51.5px;letter-spacing:-0.25px">Elements</div>
<div class="t" style="top:475.37px;font-size:8.7px;line-height:10.44px;color:#c6cfcd;font-weight:normal;left:99.2px;letter-spacing:-0.25px">Console</div>
<div class="t" style="top:475.37px;font-size:8.7px;line-height:10.44px;color:#c6cfcd;font-weight:normal;left:143.0px;letter-spacing:-0.25px">Sources</div>
<div class="t" style="top:475.37px;font-size:8.7px;line-height:10.44px;color:#7fd3cc;font-weight:normal;left:185.3px;letter-spacing:-0.25px">Network</div>
<div class="t" style="top:475.37px;font-size:8.7px;line-height:10.44px;color:#c6cfcd;font-weight:normal;left:230.8px;letter-spacing:-0.25px">Performance</div>
<div class="t" style="top:475.37px;font-size:8.7px;line-height:10.44px;color:#c6cfcd;font-weight:normal;left:292.4px;letter-spacing:-0.25px">Memory</div>
<div class="t" style="top:475.37px;font-size:8.7px;line-height:10.44px;color:#c6cfcd;font-weight:normal;left:337.8px;letter-spacing:-0.25px">Application</div>
<div class="t" style="top:475.37px;font-size:8.7px;line-height:10.44px;color:#c6cfcd;font-weight:normal;left:394.7px;letter-spacing:-0.25px">Privacy and security</div>
<div class="t" style="top:475.37px;font-size:8.7px;line-height:10.44px;color:#c6cfcd;font-weight:normal;left:487.8px;letter-spacing:-0.25px">Lighthouse</div>
<div class="t" style="top:475.37px;font-size:8.7px;line-height:10.44px;color:#c6cfcd;font-weight:normal;left:543.0px;letter-spacing:-0.25px">Recorder</div>
<div style="left:179.0px;top:487.4px;width:45.4px;height:1.6px;background:#6ac9c2"></div>
<svg style="left:891px;top:475px" width="9" height="9" viewBox="0 0 9 9"><circle cx="4.5" cy="4.5" r="4.3" fill="#ef5a4a"/><path d="M2.8 2.8 L6.2 6.2 M6.2 2.8 L2.8 6.2" stroke="#243c3a" stroke-width="1.1"/></svg>
<div class="t" style="top:475.27px;font-size:8.7px;line-height:10.44px;color:#c6cfcd;font-weight:normal;left:901.0px;letter-spacing:-0.3px">92</div>
<svg style="left:914px;top:475px" width="10" height="9" viewBox="0 0 10 9"><polygon points="5,0.3 9.8,8.8 0.2,8.8" fill="#f09a3a"/><rect x="4.5" y="3" width="1" height="3" fill="#243c3a"/></svg>
<div class="t" style="top:475.27px;font-size:8.7px;line-height:10.44px;color:#c6cfcd;font-weight:normal;left:925.0px;">1</div>
<svg style="left:933.5px;top:475.5px" width="7" height="8" viewBox="0 0 7 8"><path d="M0.3 0.3 H6.7 V5.5 H2 L0.3 7.7z" fill="#ef4a4a"/></svg>
<div class="t" style="top:475.27px;font-size:8.7px;line-height:10.44px;color:#c6cfcd;font-weight:normal;left:942.0px;">1</div>
<div style="left:951.2px;top:474.0px;width:0.8px;height:12.0px;background:#3f5654"></div>
<div style="left:957.4px;top:473.3px;width:13.3px;height:13.3px;border-radius:7px;background:#2a7ae0"></div>
<svg style="left:960px;top:476px" width="8" height="8" viewBox="0 0 8 8"><path d="M1 1 V7 H7 V4" stroke="#fff" stroke-width="1.3" fill="none"/><circle cx="6" cy="1.8" r="1.2" fill="#fff"/></svg>
<svg style="left:976.5px;top:474px" width="11" height="11" viewBox="0 0 12 12"><circle cx="6" cy="6" r="2" stroke="#c6cfcd" stroke-width="1.2" fill="none"/><path d="M6 0.8 L7.3 2 L9.4 1.6 L9.8 3.6 L11.4 5 L10.3 6.8 L10.8 8.8 L8.8 9.4 L7.6 11 L6 10 L4.4 11 L3.2 9.4 L1.2 8.8 L1.7 6.8 L0.6 5 L2.2 3.6 L2.6 1.6 L4.7 2z" stroke="#c6cfcd" stroke-width="1.1" fill="none"/></svg>
<svg style="left:999.5px;top:474.5px" width="4" height="11" viewBox="0 0 4 11"><g fill="#c6cfcd"><circle cx="2" cy="1.8" r="1.1"/><circle cx="2" cy="5.5" r="1.1"/><circle cx="2" cy="9.2" r="1.1"/></g></svg>
<svg style="left:1015px;top:475.5px" width="9" height="9" viewBox="0 0 9 9"><path d="M0.8 0.8 L8.2 8.2 M8.2 0.8 L0.8 8.2" stroke="#c6cfcd" stroke-width="1.2"/></svg>
<svg style="left:6px;top:493.2px" width="10.6" height="10.6" viewBox="0 0 10.6 10.6"><circle cx="5.3" cy="5.3" r="5.1" fill="#e8604c"/><circle cx="5.3" cy="5.3" r="3.4" fill="#f0674f" stroke="#a8402f" stroke-width="0.7"/></svg>
<svg style="left:25.4px;top:493px" width="11" height="11" viewBox="0 0 11 11"><circle cx="5.5" cy="5.5" r="4.6" stroke="#c6cfcd" stroke-width="1.2" fill="none"/><line x1="2.3" y1="8.7" x2="8.7" y2="2.3" stroke="#c6cfcd" stroke-width="1.2"/></svg>
<div style="left:43.0px;top:492.0px;width:0.8px;height:13.0px;background:#3a4644"></div>
<svg style="left:51.8px;top:493px" width="10" height="10" viewBox="0 0 10 10"><path d="M0.8 1 H8.2 L5.2 4.8 V9.2 L3.8 8.4 V4.8z" stroke="#5cc6c0" stroke-width="1.1" fill="none" stroke-linejoin="round"/><rect x="7.2" y="7" width="2.5" height="2.5" fill="#5cc6c0"/></svg>
<svg style="left:69.3px;top:493px" width="10.5" height="10.5" viewBox="0 0 11 11"><circle cx="4.3" cy="4.3" r="3.3" stroke="#c6cfcd" stroke-width="1.2" fill="none"/><line x1="6.8" y1="6.8" x2="10.2" y2="10.2" stroke="#c6cfcd" stroke-width="1.3"/></svg>
<div style="left:86.8px;top:492.0px;width:0.8px;height:13.0px;background:#3a4644"></div>
<div style="left:93.8px;top:493.5px;width:8.7px;height:9.0px;border:1px solid #6d7775;border-radius:2px;box-sizing:border-box;background:#3a4341"></div>
<div class="t" style="top:493.46px;font-size:8.6px;line-height:10.32px;color:#c6cfcd;font-weight:normal;left:106.4px;letter-spacing:-0.3px">Preserve log</div>
<div style="left:157.0px;top:492.0px;width:0.8px;height:13.0px;background:#3a4644"></div>
<div style="left:163.7px;top:493.5px;width:9.2px;height:9.0px;border:1px solid #6d7775;border-radius:2px;box-sizing:border-box;background:#3a4341"></div>
<div class="t" style="top:493.46px;font-size:8.6px;line-height:10.32px;color:#c6cfcd;font-weight:normal;left:176.8px;letter-spacing:-0.3px">Disable cache</div>
<div style="left:228.9px;top:490.5px;width:78.1px;height:15.3px;border:1px solid #7d8785;border-radius:3px;box-sizing:border-box"></div>
<div class="t" style="top:493.46px;font-size:8.6px;line-height:10.32px;color:#e4eae9;font-weight:normal;left:233.5px;letter-spacing:-0.3px">No throttling</div>
<svg style="left:297px;top:496.5px" width="6" height="4" viewBox="0 0 6 4"><polygon points="0,0 6,0 3,3.5" fill="#c6cfcd"/></svg>
<svg style="left:310px;top:493px" width="12" height="10" viewBox="0 0 12 10"><g stroke="#c6cfcd" stroke-width="1.1" fill="none"><path d="M0.8 3.5 Q6 -0.8 11.2 3.5"/><path d="M2.6 5.5 Q6 2.6 9.4 5.5"/></g><circle cx="6" cy="7.6" r="1" fill="#c6cfcd"/><circle cx="9.5" cy="8" r="2" fill="#1f2725" stroke="#c6cfcd" stroke-width="0.9"/></svg>
<div style="left:328.2px;top:492.0px;width:0.8px;height:13.0px;background:#3a4644"></div>
<svg style="left:336px;top:492.5px" width="9.5" height="11" viewBox="0 0 9 11"><path d="M4.5 8 V1.2 M1.5 4.2 L4.5 1.2 L7.5 4.2 M0.5 10 H8.5" stroke="#c6cfcd" stroke-width="1.2" fill="none"/></svg>
<svg style="left:356px;top:492.5px" width="9.5" height="11" viewBox="0 0 9 11"><path d="M4.5 1 V7.8 M1.5 4.8 L4.5 7.8 L7.5 4.8 M0.5 10 H8.5" stroke="#c6cfcd" stroke-width="1.2" fill="none"/></svg>
<div style="left:1007.5px;top:491.5px;width:0.8px;height:13.5px;background:#3a4644"></div>
<svg style="left:1013.5px;top:492px" width="12" height="12" viewBox="0 0 12 12"><circle cx="6" cy="6" r="2" stroke="#c6cfcd" stroke-width="1.2" fill="none"/><path d="M6 0.8 L7.3 2 L9.4 1.6 L9.8 3.6 L11.4 5 L10.3 6.8 L10.8 8.8 L8.8 9.4 L7.6 11 L6 10 L4.4 11 L3.2 9.4 L1.2 8.8 L1.7 6.8 L0.6 5 L2.2 3.6 L2.6 1.6 L4.7 2z" stroke="#c6cfcd" stroke-width="1.1" fill="none"/></svg>
<div style="left:1.5px;top:507.5px;width:2.5px;height:9.5px;background:#5a8f8a"></div>
<div style="left:1.5px;top:517.0px;width:2.5px;height:6.5px;background:#c98a90"></div>
<div style="left:65.0px;top:507.2px;width:0.8px;height:18.1px;background:#3b4a47"></div>
<div class="t" style="top:511.69px;font-size:7.2px;line-height:8.64px;color:#dfe6e4;font-weight:normal;right:960.4px;letter-spacing:-0.55px">100,000 ms</div>
<div style="left:129.8px;top:507.2px;width:0.8px;height:18.1px;background:#3b4a47"></div>
<div class="t" style="top:511.69px;font-size:7.2px;line-height:8.64px;color:#dfe6e4;font-weight:normal;right:895.6px;letter-spacing:-0.55px">200,000 ms</div>
<div style="left:194.5px;top:507.2px;width:0.8px;height:18.1px;background:#3b4a47"></div>
<div class="t" style="top:511.69px;font-size:7.2px;line-height:8.64px;color:#dfe6e4;font-weight:normal;right:830.9px;letter-spacing:-0.55px">300,000 ms</div>
<div style="left:259.3px;top:507.2px;width:0.8px;height:18.1px;background:#3b4a47"></div>
<div class="t" style="top:511.69px;font-size:7.2px;line-height:8.64px;color:#dfe6e4;font-weight:normal;right:766.1px;letter-spacing:-0.55px">400,000 ms</div>
<div style="left:324.1px;top:507.2px;width:0.8px;height:18.1px;background:#3b4a47"></div>
<div class="t" style="top:511.69px;font-size:7.2px;line-height:8.64px;color:#dfe6e4;font-weight:normal;right:701.3px;letter-spacing:-0.55px">500,000 ms</div>
<div style="left:388.9px;top:507.2px;width:0.8px;height:18.1px;background:#3b4a47"></div>
<div class="t" style="top:511.69px;font-size:7.2px;line-height:8.64px;color:#dfe6e4;font-weight:normal;right:636.5px;letter-spacing:-0.55px">600,000 ms</div>
<div style="left:453.6px;top:507.2px;width:0.8px;height:18.1px;background:#3b4a47"></div>
<div class="t" style="top:511.69px;font-size:7.2px;line-height:8.64px;color:#dfe6e4;font-weight:normal;right:571.8px;letter-spacing:-0.55px">700,000 ms</div>
<div style="left:518.4px;top:507.2px;width:0.8px;height:18.1px;background:#3b4a47"></div>
<div class="t" style="top:511.69px;font-size:7.2px;line-height:8.64px;color:#dfe6e4;font-weight:normal;right:507.0px;letter-spacing:-0.55px">800,000 ms</div>
<div style="left:583.2px;top:507.2px;width:0.8px;height:18.1px;background:#3b4a47"></div>
<div class="t" style="top:511.69px;font-size:7.2px;line-height:8.64px;color:#dfe6e4;font-weight:normal;right:442.2px;letter-spacing:-0.55px">900,000 ms</div>
<div style="left:647.9px;top:507.2px;width:0.8px;height:18.1px;background:#3b4a47"></div>
<div class="t" style="top:511.69px;font-size:7.2px;line-height:8.64px;color:#dfe6e4;font-weight:normal;right:377.5px;letter-spacing:-0.55px">1,000,000 ms</div>
<div style="left:712.7px;top:507.2px;width:0.8px;height:18.1px;background:#3b4a47"></div>
<div class="t" style="top:511.69px;font-size:7.2px;line-height:8.64px;color:#dfe6e4;font-weight:normal;right:312.7px;letter-spacing:-0.55px">1,100,000 ms</div>
<div style="left:777.5px;top:507.2px;width:0.8px;height:18.1px;background:#3b4a47"></div>
<div class="t" style="top:511.69px;font-size:7.2px;line-height:8.64px;color:#dfe6e4;font-weight:normal;right:247.9px;letter-spacing:-0.55px">1,200,000 ms</div>
<div style="left:842.2px;top:507.2px;width:0.8px;height:18.1px;background:#3b4a47"></div>
<div class="t" style="top:511.69px;font-size:7.2px;line-height:8.64px;color:#dfe6e4;font-weight:normal;right:183.2px;letter-spacing:-0.55px">1,300,000 ms</div>
<div style="left:907.0px;top:507.2px;width:0.8px;height:18.1px;background:#3b4a47"></div>
<div class="t" style="top:511.69px;font-size:7.2px;line-height:8.64px;color:#dfe6e4;font-weight:normal;right:118.4px;letter-spacing:-0.55px">1,400,000 ms</div>
<div style="left:971.8px;top:507.2px;width:0.8px;height:18.1px;background:#3b4a47"></div>
<div class="t" style="top:511.69px;font-size:7.2px;line-height:8.64px;color:#dfe6e4;font-weight:normal;right:53.6px;letter-spacing:-0.55px">1,500,000 ms</div>
<div style="left:1036.5px;top:507.2px;width:0.8px;height:18.1px;background:#3b4a47"></div>
<div class="t" style="top:511.69px;font-size:7.2px;line-height:8.64px;color:#dfe6e4;font-weight:normal;right:-11.2px;letter-spacing:-0.55px">1,600,000 ms</div>
<div style="left:37.0px;top:523.6px;width:5.0px;height:1.4px;background:#7d8684"></div>
<div style="left:52.0px;top:523.6px;width:5.0px;height:1.4px;background:#7d8684"></div>
<div style="left:97.0px;top:523.6px;width:5.0px;height:1.4px;background:#7d8684"></div>
<div style="left:167.0px;top:523.6px;width:5.0px;height:1.4px;background:#7d8684"></div>
<div style="left:271.0px;top:523.6px;width:6.0px;height:1.4px;background:#7d8684"></div>
<div style="left:402.0px;top:523.6px;width:9.0px;height:1.4px;background:#7d8684"></div>
<div style="left:453.5px;top:523.6px;width:5.0px;height:1.4px;background:#7d8684"></div>
<div style="left:465.5px;top:523.6px;width:16.0px;height:1.4px;background:#7d8684"></div>
<div style="left:487.0px;top:523.6px;width:6.5px;height:1.4px;background:#7d8684"></div>
<div style="left:537.0px;top:523.6px;width:5.0px;height:1.4px;background:#7d8684"></div>
<div style="left:555.0px;top:523.6px;width:5.0px;height:1.4px;background:#7d8684"></div>
<div style="left:607.0px;top:523.6px;width:6.0px;height:1.4px;background:#7d8684"></div>
<div style="left:687.0px;top:523.6px;width:5.0px;height:1.4px;background:#7d8684"></div>
<div style="left:712.0px;top:523.6px;width:5.0px;height:1.4px;background:#7d8684"></div>
<div style="left:725.0px;top:523.6px;width:5.0px;height:1.4px;background:#7d8684"></div>
<div style="left:792.0px;top:523.6px;width:5.0px;height:1.4px;background:#7d8684"></div>
<div style="left:0.0px;top:525.3px;width:1024.0px;height:21.7px;background:#1a2a3b"></div>
<div style="left:0.0px;top:525.3px;width:27.9px;height:21.7px;background:#172434"></div>
<svg style="left:7.3px;top:530px" width="13.5" height="13.5" viewBox="0 0 14 14"><g fill="#f2f6fa"><rect x="0" y="0" width="6.5" height="6.5"/><rect x="7.5" y="0" width="6.5" height="6.5"/><rect x="0" y="7.5" width="6.5" height="6.5"/><rect x="7.5" y="7.5" width="6.5" height="6.5"/></g></svg>
<div style="left:27.9px;top:525.3px;width:195.0px;height:21.7px;background:#f3f3f3"></div>
<svg style="left:36.5px;top:530.5px" width="13.5" height="13.5" viewBox="0 0 14 14"><circle cx="8.5" cy="5.5" r="4.3" stroke="#222" stroke-width="1.4" fill="none"/><line x1="5.3" y1="8.7" x2="1" y2="13" stroke="#222" stroke-width="1.6"/></svg>
<div class="t" style="top:530.13px;font-size:11.8px;line-height:14.16px;color:#3a3a3a;font-weight:normal;left:58.0px;;letter-spacing:-0.878px">Search</div>
<svg style="left:231.5px;top:530px" width="14" height="14" viewBox="0 0 14 14"><defs><linearGradient id="cp" x1="0" y1="0" x2="1" y2="1"><stop offset="0" stop-color="#2aa8f2"/><stop offset="0.45" stop-color="#8a5cf0"/><stop offset="0.7" stop-color="#f0609a"/><stop offset="1" stop-color="#f7b03a"/></linearGradient></defs><path d="M4 1 H9 Q11 1 11.5 3 L13 9 Q13.5 13 10 13 H5 Q3 13 2.5 11 L1 5 Q0.5 1 4 1z" fill="url(#cp)"/><path d="M5 4 H8 L9 10 H6z" fill="#1a2a3b" opacity="0.35"/></svg>
<svg style="left:259.5px;top:530.5px" width="13.5" height="12" viewBox="0 0 14 12"><path d="M0.5 1 H5 L6.5 2.5 H13.5 V11.5 H0.5z" fill="#f5c542"/><rect x="0.5" y="4" width="13" height="7.5" fill="#ffd75e"/><rect x="3" y="6" width="8" height="4" fill="#3a78c8"/></svg>
<div style="left:280.5px;top:525.3px;width:26.0px;height:21.7px;background:#394656"></div>
<div style="left:287.5px;top:530px;width:13.5px;height:13.5px;border-radius:7px;background:conic-gradient(from -30deg,#ea4335 0 120deg,#fbbc05 120deg 240deg,#34a853 240deg 360deg)"></div>
<div style="left:291.3px;top:533.8px;width:6px;height:6px;border-radius:3px;background:#4285f4;box-shadow:0 0 0 1.1px #fff"></div>
<svg style="left:315.5px;top:530px" width="13" height="13.5" viewBox="0 0 13 14"><rect x="0.5" y="0.5" width="8" height="10" fill="#f5c542"/><path d="M3 4 L9 10 L12.5 13" stroke="#2d6fd0" stroke-width="2.2"/><path d="M9 4 L4 10" stroke="#2ea86b" stroke-width="1.8"/></svg>
<div style="left:342.5px;top:530px;width:14px;height:14px;border-radius:7px;background:conic-gradient(from 200deg,#0f6fc4,#1d9be0,#3cc8a8,#7fd86a,#2db0d8,#0f6fc4)"></div>
<div style="left:345px;top:535.5px;width:7px;height:5px;border-radius:3px;background:#1a2a3b"></div>
<div style="left:343.5px;top:538.5px;width:5px;height:5px;border-radius:3px;background:#d8dde2"></div>
<svg style="left:370.5px;top:530px" width="14" height="14" viewBox="0 0 14 14"><rect x="0.5" y="3.5" width="8" height="8" rx="1.5" fill="#5b5fc7"/><circle cx="10.5" cy="3" r="2.3" fill="#7b83eb"/><path d="M7 6 H13.5 V10.5 A3 3 0 0 1 7 10.5z" fill="#7b83eb"/><text x="2.6" y="9.8" font-size="6" font-family="Liberation Sans" font-weight="bold" fill="#fff">T</text></svg>
<div style="left:367.6px;top:545.8px;width:21.1px;height:1.2px;background:#8fa6c6"></div>
<svg style="left:950px;top:535px" width="9" height="6" viewBox="0 0 9 6"><polyline points="0.8,5.2 4.5,1.2 8.2,5.2" stroke="#e6eaee" stroke-width="1.2" fill="none"/></svg>
<svg style="left:967.8px;top:532px" width="11" height="11" viewBox="0 0 11 11"><g stroke="#e6eaee" stroke-width="1" fill="none"><path d="M1 10 A9 9 0 0 1 10 1"/><path d="M3.5 10 A6.5 6.5 0 0 1 10 3.5"/><path d="M6 10 A4 4 0 0 1 10 6"/></g><circle cx="9.5" cy="9.5" r="1.2" fill="#e6eaee"/></svg>
<svg style="left:983.5px;top:532.5px" width="11.5" height="10" viewBox="0 0 12 10"><path d="M0.8 3.5 H3 L6 0.8 V9.2 L3 6.5 H0.8z" stroke="#e6eaee" stroke-width="1" fill="none"/><path d="M8 3.2 L11.2 6.6 M11.2 3.2 L8 6.6" stroke="#e6eaee" stroke-width="1"/></svg>
<div class="t" style="top:531.22px;font-size:9.8px;line-height:11.76px;color:#eef2f6;font-weight:normal;left:1003.4px;letter-spacing:-0.2px">11:08</div>
</div></body></html>
